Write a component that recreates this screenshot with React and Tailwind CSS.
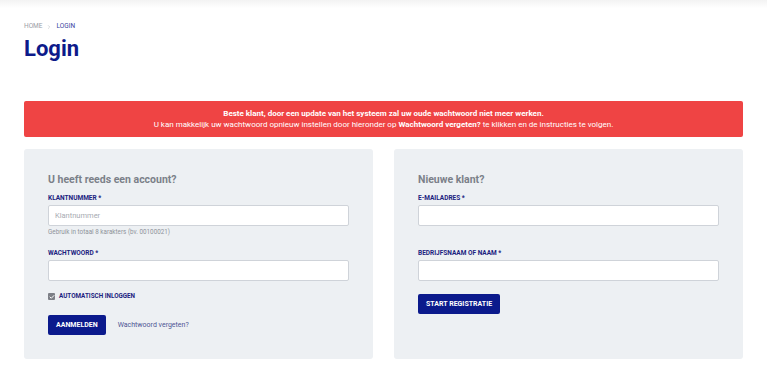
import { Check, ChevronRight } from 'lucide-react';

const Label = ({ children }) => (
  <label className="block text-[6.5px] font-bold uppercase text-[#1b2280] leading-[7px] mb-[3px]">
    {children}
  </label>
);

const Input = ({ placeholder }) => (
  <input
    type="text"
    placeholder={placeholder}
    className="block w-full h-[21px] bg-white border border-[#cfd3d9] rounded-[2px] px-[6px] text-[7.5px] text-gray-700 placeholder:text-[#a7abb2] outline-none"
  />
);

const App = () => {
  return (
    <div className="w-[767px] h-[384px] bg-white overflow-hidden" style={{ fontFamily: 'Roboto, "Liberation Sans", sans-serif' }}>
      <div className="h-[8px] bg-gradient-to-b from-[#f3f3f3] to-white" />

      <div className="px-[24px]">
        <div className="flex items-center gap-[4px] mt-[15px] text-[6.5px] leading-[7px]">
          <span className="text-[#9a9ea6]">HOME</span>
          <ChevronRight className="w-[6px] h-[6px] text-[#b5b8be]" strokeWidth={2} />
          <span className="text-[#3a44a0]">LOGIN</span>
        </div>
        <h1 className="mt-[6px] text-[22px] font-bold text-[#0d1a8a] leading-[26px]">Login</h1>

        <div className="mt-[39px] bg-[#ef4444] rounded-[2px] h-[36px] flex flex-col items-center justify-center text-white text-[8px] leading-[11px]">
          <p className="font-bold">Beste klant, door een update van het systeem zal uw oude wachtwoord niet meer werken.</p>
          <p>
            U kan makkelijk uw wachtwoord opnieuw instellen door hieronder op <span className="font-bold">Wachtwoord vergeten?</span> te klikken en de instructies te volgen.
          </p>
        </div>

        <div className="mt-[12px] grid grid-cols-2 gap-[21px]">
          <div className="bg-[#edf0f3] rounded-[3px] h-[210px] px-[24px] pt-[24px]">
            <h2 className="text-[10.5px] font-bold text-[#7b8089] leading-[14px]">U heeft reeds een account?</h2>
            <div className="mt-[8px]">
              <Label>Klantnummer *</Label>
              <Input placeholder="Klantnummer" />
              <p className="mt-[3px] text-[6.3px] text-[#8e939a] leading-[7px]">Gebruik in totaal 8 karakters (bv. 00100021)</p>
            </div>
            <div className="mt-[14px]">
              <Label>Wachtwoord *</Label>
              <Input />
            </div>
            <div className="mt-[12px] flex items-center gap-[4px]">
              <span className="w-[7px] h-[7px] rounded-[1px] bg-[#7c7f86] flex items-center justify-center">
                <Check className="w-[6px] h-[6px] text-white" strokeWidth={4} />
              </span>
              <span className="text-[6.3px] font-bold text-[#1b2280] leading-none">AUTOMATISCH INLOGGEN</span>
            </div>
            <div className="mt-[15px] flex items-center gap-[12px]">
              <button className="h-[20px] px-[8px] bg-[#0b1a8c] rounded-[2px] text-white text-[7px] font-bold leading-none">AANMELDEN</button>
              <span className="text-[7px] text-[#4d5693]">Wachtwoord vergeten?</span>
            </div>
          </div>

          <div className="bg-[#edf0f3] rounded-[3px] h-[210px] px-[24px] pt-[24px]">
            <h2 className="text-[10.5px] font-bold text-[#7b8089] leading-[14px]">Nieuwe klant?</h2>
            <div className="mt-[8px]">
              <Label>E-mailadres *</Label>
              <Input />
            </div>
            <div className="mt-[24px]">
              <Label>Bedrijfsnaam of naam *</Label>
              <Input />
            </div>
            <div className="mt-[13px] flex">
              <button className="h-[20px] px-[8px] bg-[#0b1a8c] rounded-[2px] text-white text-[7px] font-bold leading-none">START REGISTRATIE</button>
            </div>
          </div>
        </div>
      </div>
    </div>
  );
};

export default App;
